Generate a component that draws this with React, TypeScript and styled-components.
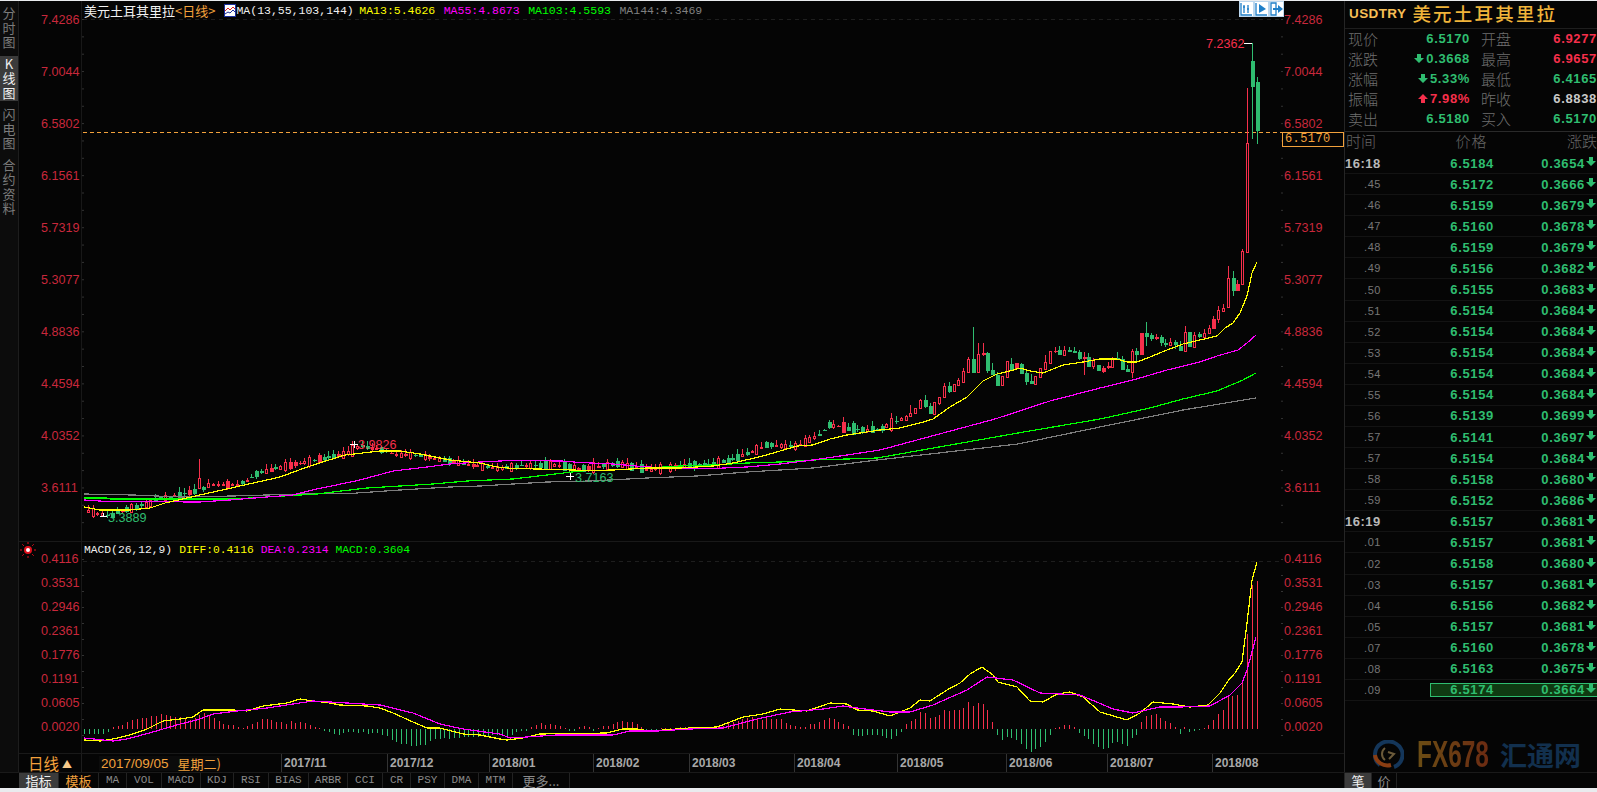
import React, { FC } from 'react';
import styled, { createGlobalStyle } from 'styled-components';

const RED = '#f62f4b';
const GREEN = '#2fbd70';
const AXIS_RED = '#c9283c';
const ORANGE = '#f2a13c';
const CJK = '"Noto Sans CJK SC", "Liberation Sans", sans-serif';
const MONO = '"Liberation Mono", "Noto Sans CJK SC", monospace';
const NUM = '"Liberation Sans", sans-serif';

const GlobalStyle = createGlobalStyle`
	html, body {
		margin: 0;
		padding: 0;
		background: #050505;
		overflow: hidden;
	}
`;

const Page = styled.div`
	display: flex;
	flex-direction: column;
	width: 1597px;
	height: 792px;
	background: #050505;
	overflow: hidden;
`;

const Edge = styled.div<{ $h: number }>`
	flex: none;
	height: ${(p) => p.$h}px;
	background: #e9ebee;
`;

const Main = styled.div`
	display: flex;
	flex: none;
	height: 771px;
`;

const Rail = styled.div`
	flex: none;
	display: flex;
	flex-direction: column;
	width: 18px;
	padding-top: 4px;
	box-sizing: content-box;
	border-right: 1px solid #1d1d1d;
	background: #0c0c0c;
`;

const RailTab = styled.div<{ $active?: boolean }>`
	display: flex;
	flex-direction: column;
	align-items: center;
	margin-bottom: 5px;
	padding: 1px 0;
	font-family: ${CJK};
	font-size: 13px;
	line-height: 14.5px;
	color: ${(p) => (p.$active ? '#f0f0f0' : '#7b7b7b')};
	background: ${(p) => (p.$active ? '#3b3b3b' : 'transparent')};
`;

const ChartColumn = styled.div`
	flex: none;
	display: flex;
	flex-direction: column;
	width: 1325px;
`;

const Pane = styled.div<{ $h: number; $line?: boolean }>`
	position: relative;
	flex: none;
	display: flex;
	box-sizing: border-box;
	height: ${(p) => p.$h}px;
	border-top: ${(p) => (p.$line ? '1px solid #191919' : 'none')};
`;

const Axis = styled.div<{ $w: number; $row: number; $pad: number; $left?: boolean }>`
	flex: none;
	display: grid;
	grid-auto-rows: ${(p) => p.$row}px;
	align-content: start;
	box-sizing: border-box;
	width: ${(p) => p.$w}px;
	padding-top: ${(p) => p.$pad}px;
	padding-left: ${(p) => (p.$left ? 22 : 1)}px;
	font-family: ${NUM};
	font-size: 12.6px;
	line-height: 14px;
	color: ${AXIS_RED};
`;

const Plot = styled.div`
	position: relative;
	flex: none;
	width: 1201px;
	border-left: 1px solid #181818;
	margin-left: -1px;
`;

const ChartSvg = styled.svg`
	display: block;
	width: 1201px;
	height: 100%;
`;

const LegendBar = styled.div<{ $top: number; $gap: number; $size: number }>`
	position: absolute;
	left: 2px;
	top: ${(p) => p.$top}px;
	display: flex;
	align-items: center;
	gap: ${(p) => p.$gap}px;
	height: 16px;
	font-family: ${MONO};
	font-size: ${(p) => p.$size}px;
	white-space: nowrap;
`;

const LegendItem = styled.span<{ $color: string; $tight?: boolean }>`
	margin-right: ${(p) => (p.$tight ? -3 : 0)}px;
	color: ${(p) => p.$color};
`;

const Symbol = styled.span`
	display: flex;
	align-items: center;
	margin-right: -8.5px;
	font-family: ${CJK};
	font-size: 13px;
	color: #f2f2f2;
`;

const Period = styled.span`
	margin-right: 9px;
	color: ${ORANGE};
	font-size: 13px;
`;

const IconButtons = styled.div`
	position: absolute;
	top: 0;
	right: -1px;
	display: flex;
	height: 16px;
	background: #fff;
`;

const IconButton = styled.svg`
	display: block;
	width: 15px;
	height: 16px;
`;

const LastPrice = styled.div`
	position: absolute;
	left: -1px;
	top: 131px;
	box-sizing: border-box;
	width: 62px;
	height: 15px;
	border: 1px solid ${ORANGE};
	padding-left: 2px;
	font-family: ${MONO};
	font-size: 12px;
	line-height: 13px;
	letter-spacing: 0.4px;
	color: ${ORANGE};
	background: #050505;
`;

const RightAxisWrap = styled.div`
	position: relative;
	flex: none;
	width: 61px;
`;

const SunMark = styled.svg`
	position: absolute;
	left: 1px;
	top: 0;
	width: 16px;
	height: 16px;
`;

const DateRow = styled.div`
	position: relative;
	flex: none;
	display: flex;
	box-sizing: border-box;
	height: 19px;
	border-top: 1px solid #191919;
`;

const PeriodBox = styled.div`
	flex: none;
	display: flex;
	align-items: center;
	justify-content: center;
	gap: 3px;
	width: 63px;
	border-right: 1px solid #1d1d1d;
	box-sizing: border-box;
	font-family: ${CJK};
	font-size: 15.5px;
	color: ${ORANGE};
`;

const SmallTriangle = styled.span`
	font-size: 10px;
	color: #f6c98a;
`;

const XAxis = styled.div`
	display: flex;
	flex: 1;
`;

const XLabel = styled.div<{ $tick?: boolean }>`
	flex: none;
	box-sizing: border-box;
	padding-left: 2px;
	border-left: ${(p) => (p.$tick ? '1px solid #333' : 'none')};
	font-family: ${NUM};
	font-size: 12px;
	font-weight: 700;
	line-height: 18px;
	color: #a8a8a8;
`;

const DateTag = styled.div`
	position: absolute;
	left: 80px;
	top: 2px;
	display: flex;
	align-items: center;
	gap: 9px;
	width: 121px;
	height: 15px;
	padding-left: 2px;
	box-sizing: border-box;
	background: #0b0b0b;
	font-family: ${NUM};
	font-size: 13.5px;
	color: ${ORANGE};
	white-space: nowrap;
`;

const TagWeek = styled.span`
	font-family: ${CJK};
	font-size: 13px;
`;

const Side = styled.div`
	flex: none;
	display: flex;
	flex-direction: column;
	box-sizing: border-box;
	width: 253px;
	border-left: 1px solid #252525;
`;

const SideTitle = styled.div`
	flex: none;
	display: flex;
	align-items: center;
	box-sizing: border-box;
	height: 28px;
	padding: 0 0 3px 4px;
	border-bottom: 1px solid #1e1e1e;
	white-space: nowrap;
`;

const Ticker = styled.span`
	font-family: ${NUM};
	font-size: 13.5px;
	font-weight: 700;
	letter-spacing: 0.4px;
	color: #f6be55;
`;

const TitleName = styled.span`
	margin-left: 6px;
	font-family: ${CJK};
	font-size: 18.5px;
	font-weight: 500;
	letter-spacing: 2.2px;
	color: #f0b43a;
`;

const Info = styled.div`
	flex: none;
	display: flex;
	flex-direction: column;
	box-sizing: border-box;
	height: 105px;
	margin-top: -2px;
	padding-top: 1px;
	border-bottom: 1px solid #2a2a2a;
`;

const InfoRow = styled.div`
	display: flex;
	align-items: center;
	height: 20px;
	padding-left: 3px;
`;

const InfoLabel = styled.span`
	flex: none;
	width: 36px;
	font-family: ${CJK};
	font-size: 15px;
	font-weight: 300;
	color: #6f6f6f;
`;

const InfoValue = styled.span<{ $color: string; $wide?: boolean }>`
	display: flex;
	align-items: center;
	justify-content: flex-end;
	gap: 2px;
	flex: ${(p) => (p.$wide ? '1' : 'none')};
	width: ${(p) => (p.$wide ? 'auto' : '86px')};
	margin-right: ${(p) => (p.$wide ? '0' : '11px')};
	font-family: ${NUM};
	font-size: 13px;
	font-weight: 700;
	letter-spacing: 0.65px;
	color: ${(p) => p.$color};
`;

const TableHead = styled.div`
	flex: none;
	display: flex;
	align-items: center;
	justify-content: space-between;
	box-sizing: border-box;
	height: 21px;
	padding: 0 0 4px 1px;
	font-family: ${CJK};
	font-size: 15px;
	font-weight: 300;
	color: #666;
`;

const HeadPrice = styled.span`
	letter-spacing: 1px;
`;

const TickRow = styled.div`
	flex: none;
	display: flex;
	align-items: center;
	box-sizing: border-box;
	height: 21.08px;
	border-bottom: 1px solid #131313;
`;

const TimeCell = styled.div<{ $major: boolean }>`
	flex: none;
	box-sizing: border-box;
	width: 85px;
	padding-left: ${(p) => (p.$major ? 0 : 19)}px;
	font-family: ${NUM};
	font-size: ${(p) => (p.$major ? 13 : 11)}px;
	font-weight: ${(p) => (p.$major ? 700 : 400)};
	letter-spacing: ${(p) => (p.$major ? 0.5 : 0.6)}px;
	color: ${(p) => (p.$major ? '#b8b8b8' : '#777')};
`;

const TickValues = styled.div<{ $live: boolean }>`
	flex: 1;
	display: flex;
	align-items: center;
	box-sizing: border-box;
	height: 14px;
	border: ${(p) => (p.$live ? `1px solid ${GREEN}` : '1px solid transparent')};
	border-right: none;
	background: ${(p) => (p.$live ? '#0f3a12' : 'transparent')};
	font-family: ${NUM};
	font-size: 13px;
	font-weight: 700;
	letter-spacing: 0.65px;
	color: ${GREEN};
`;

const TickPrice = styled.span`
	flex: none;
	width: 63px;
	text-align: right;
`;

const TickChange = styled.span`
	flex: none;
	width: 91px;
	text-align: right;
`;

const TickArrow = styled.span`
	display: flex;
	margin-left: 1px;
	margin-top: -3px;
`;

const Watermark = styled.div`
	flex: none;
	display: flex;
	align-items: center;
	margin-top: auto;
	height: 30px;
	padding: 0 0 2px 27px;
`;

const MarkLatin = styled.span`
	flex: none;
	margin-left: 13px;
	margin-right: -29px;
	width: 112px;
	font-family: ${NUM};
	font-size: 37px;
	font-weight: 700;
	line-height: 30px;
	transform: scaleX(0.66);
	transform-origin: left center;
	background: linear-gradient(90deg, #6b4d14, #6c2a12);
	-webkit-background-clip: text;
	background-clip: text;
	color: transparent;
`;

const MarkCjk = styled.span`
	font-family: ${CJK};
	font-size: 27px;
	font-weight: 700;
	letter-spacing: 0;
	color: #12304e;
	line-height: 30px;
`;

const BottomBar = styled.div`
	flex: none;
	display: flex;
	height: 16px;
	border-top: 1px solid #1a1a1a;
	box-sizing: border-box;
	padding-left: 19px;
`;

const BottomTab = styled.div<{ $w: number; $active?: boolean; $accent?: boolean; $cjk?: boolean }>`
	flex: none;
	box-sizing: border-box;
	width: ${(p) => p.$w}px;
	border-right: 1px solid #222;
	text-align: center;
	font-family: ${(p) => (p.$cjk ? CJK : MONO)};
	font-size: ${(p) => (p.$cjk ? 13 : 11)}px;
	line-height: 15px;
	color: ${(p) => (p.$active ? '#f0f0f0' : p.$accent ? ORANGE : '#8a8a8a')};
	background: ${(p) => (p.$active ? '#3b3b3b' : 'transparent')};
`;

const BottomGap = styled.div`
	flex: 1;
	border-right: 1px solid #252525;
`;

const BottomEnd = styled.div`
	flex: none;
	width: 200px;
`;

type Pt = [number, number];
// c: s = solid red, r = hollow red, g = green
type Candle = [number, number, number, number, string];

const ma13: Pt[] = [[84,507],[100,510],[130,510],[150,508],[165,503],[200,495],[240,486],[280,477],[310,466],[345,455],[380,451],[400,451],[420,454],[450,460],[480,463],[497,467],[513,468.5],[538,469],[590,470.5],[613,470],[647,468],[680,468],[713,466],[733,463],[763,456],[797,446],[813,445],[830,439],[847,435],[880,430],[900,428],[920,423],[933,419],[950,407],[967,397],[983,381],[997,374],[1010,371],[1020,368],[1030,371],[1043,373],[1063,365],[1083,362],[1100,359],[1117,359],[1127,362],[1137,362],[1150,357],[1167,350],[1183,344],[1200,340],[1217,336],[1225,328],[1233,323],[1240,313],[1247,296],[1252,273],[1257,262]];
const ma55: Pt[] = [[84,500],[107,501.5],[200,502],[230,500],[267,497],[293,495],[317,489],[360,480],[393,471],[427,467],[450,464],[480,462],[510,460.5],[562,461],[580,462.5],[613,464],[647,467],[680,468],[713,468.5],[747,467],[780,464],[813,460],[847,455],[880,450],[995,419],[1050,401],[1100,388],[1133,380],[1167,370],[1200,362],[1217,356],[1238,350],[1247,343],[1256,335]];
const ma103: Pt[] = [[84,498],[107,498],[110,499],[233,499],[250,498],[283,496],[317,494],[333,492],[367,488],[400,486],[433,484],[467,481],[513,479],[547,475],[580,471],[613,470],[647,468],[680,466],[713,465],[747,463],[780,462],[813,460],[847,459],[877,458],[1018,433],[1100,419],[1150,408],[1183,399],[1217,391],[1243,380],[1256,373]];
const ma144: Pt[] = [[84,494],[133,495],[180,497],[233,496],[300,494],[350,493.5],[400,490],[450,487],[480,486],[513,484],[547,482],[590,481],[647,478],[697,476],[747,472],[780,470],[813,468],[877,460],[1018,444],[1100,427],[1183,410],[1256,398]];
const diff: Pt[] = [[84,740],[100,741],[113,739],[130,735],[147,729],[163,721],[180,719],[193,717],[203,710],[233,710],[247,711],[263,706],[287,703],[300,699],[313,701],[330,703],[340,705],[367,706],[380,708],[393,713],[413,722],[427,728],[440,728],[463,734],[480,735],[500,739],[507,740],[523,738],[540,734],[607,733],[623,729],[637,729],[650,731],[690,728],[717,727],[743,717],[763,714],[780,709],[807,711],[830,703],[847,704],[857,710],[873,711],[890,716],[910,708],[920,700],[930,701],[947,690],[960,683],[970,674],[982,667],[993,675],[998,682],[1017,687],[1030,701],[1043,702],[1057,694],[1070,692],[1083,697],[1100,712],[1127,720],[1140,713],[1153,702],[1173,704],[1190,707],[1208,705],[1220,693],[1228,681],[1235,673],[1242,662],[1247,623],[1252,580],[1257,562]];
const dea: Pt[] = [[84,738],[113,741],[127,739],[153,732],[180,724],[197,720],[213,714],[237,711],[267,708],[293,704],[313,701],[347,703],[380,705],[413,713],[440,724],[463,729],[500,734],[510,738],[527,737],[557,735],[613,735],[630,731],[657,731],[690,729],[723,728],[757,719],[790,712],[823,709],[843,706],[857,708],[890,712],[910,712],[933,705],[967,690],[987,677],[1013,680],[1040,693],[1080,695],[1113,709],[1133,713],[1160,707],[1180,707],[1210,706],[1230,695],[1242,683],[1247,670],[1252,652],[1256,637]];

const histogram = [-5,-5,-5,-5,-5,-3,2,3,4,7,9,10,11,11,13,13,15,14,13,12,12,10,9,11,14,16,13,11,8,5,4,4,2,1,3,5,7,10,10,9,7,7,5,8,6,7,6,4,2,1,-2,-3,-5,-6,-4,-3,-3,-4,-3,-5,-4,-4,-6,-7,-11,-13,-15,-15,-17,-17,-16,-16,-12,-10,-10,-9,-10,-9,-9,-8,-8,-8,-8,-7,-7,-6,-6,-7,-7,-6,-3,-2,-2,2,4,6,4,5,4,3,1,-2,-2,2,3,2,-2,1,3,3,5,7,8,7,7,5,2,-1,-2,-1,1,1,1,1,2,2,2,2,2,2,2,2,2,3,6,7,8,10,11,12,11,9,11,10,10,10,6,4,3,2,2,5,5,7,9,11,10,7,5,3,-6,-7,-7,-6,-6,-6,-7,-9,-10,-7,-3,5,8,10,17,16,11,12,14,19,18,19,19,21,27,23,26,25,19,7,-6,-11,-8,-9,-11,-15,-20,-23,-20,-18,-13,-6,1,2,4,4,2,-4,-7,-10,-15,-18,-20,-19,-14,-13,-15,-17,-9,-6,7,13,14,15,11,8,6,2,-5,2,-3,-2,-1,1,4,9,15,19,32,33,34,46,95,144,148];

// x >= 900 read off the chart one by one: body top, body bottom, wick top, wick bottom, kind
const lateCandles: Candle[] = [
	[418,420,417,421,'r'],[416,420,415,421,'r'],[413,416,405,416,'r'],[408,413,408,414,'r'],[400,408,399,408,'r'],[400,407,395,408,'g'],[406,414,403,414,'g'],[402,414,402,414,'r'],[397,403,397,405,'r'],[386,397,383,397,'r'],[386,392,382,393,'g'],[384,391,384,391,'r'],[380,385,378,386,'r'],[371,382,368,382,'r'],[359,372,357,372,'r'],[359,373,327,373,'g'],[354,372,343,373,'r'],[353,355,343,356,'s'],[353,371,352,373,'g'],[370,375,363,375,'g'],[375,386,372,386,'g'],[376,385,376,385,'r'],[361,377,361,377,'r'],[364,371,358,371,'g'],[363,369,363,369,'s'],[364,374,363,374,'g'],[373,382,370,385,'g'],[381,384,374,384,'g'],[376,384,376,384,'r'],[368,377,368,377,'r'],[362,369,355,370,'r'],[351,363,351,363,'r'],[351,352,347,353,'s'],[350,355,346,355,'g'],[350,355,346,355,'r'],[350,352,347,352,'g'],[351,353,347,353,'g'],[352,359,350,360,'g'],[357,359,352,375,'s'],[357,367,353,367,'g'],[360,366,358,369,'r'],[365,371,365,371,'g'],
	[368,372,366,373,'s'],[366,368,362,369,'s'],[358,367,357,367,'r'],[358,360,352,360,'g'],[359,370,356,370,'g'],[369,372,365,372,'g'],[351,372,349,378,'r'],[351,355,348,362,'g'],[333,355,333,355,'s'],[333,337,322,346,'g'],[335,339,333,341,'g'],[337,339,334,340,'s'],[337,343,335,346,'g'],[343,345,339,347,'g'],[342,345,338,345,'r'],[342,345,340,349,'g'],[346,351,341,351,'g'],[332,351,326,351,'r'],[332,347,332,347,'g'],[335,347,332,347,'r'],[334,337,332,338,'g'],[333,337,329,337,'r'],[328,333,325,333,'r'],[319,329,316,329,'s'],[310,319,306,323,'r'],[308,311,304,311,'r'],[278,307,266,307,'r'],[278,291,271,296,'g'],[284,291,280,291,'s'],[251,284,249,284,'r'],[143,252,88,253,'r'],[61,87,43,139,'g'],[82,131,77,144,'g'],
];

// the long quiet stretch only needs the body to follow this path
const earlyPath: Pt[] = [[84,510],[100,514],[110,516],[116,513],[130,508],[150,503],[160,498],[170,497],[200,490],[210,484],[240,484],[260,472],[290,465],[300,463],[330,457],[345,454],[360,446],[380,449],[392,454],[420,456],[470,465],[500,468],[520,466],[555,465],[580,469],[617,464],[647,470],[680,466],[713,464],[733,459],[767,445],[797,446],[820,434],[830,424],[847,429],[877,430],[900,420]];

const lerp = (pts: Pt[], x: number) => {
	for (let i = 1; i < pts.length; i++) {
		if (x <= pts[i][0]) {
			const [x0, y0] = pts[i - 1];
			const [x1, y1] = pts[i];
			return y0 + ((y1 - y0) * (x - x0)) / (x1 - x0);
		}
	}
	return pts[pts.length - 1][1];
};

const STEP = 4.81;
const LAST_X = 1256.7;

const buildCandles = () => {
	const out: { x: number; c: Candle }[] = [];
	let seed = 41;
	const rnd = () => {
		seed = (seed * 16807) % 2147483647;
		return seed / 2147483647;
	};
	const firstLate = LAST_X - STEP * (lateCandles.length - 1);
	for (let x = firstLate - STEP; x >= 84; x -= STEP) {
		const mid = lerp(earlyPath, x);
		const h = 1 + Math.floor(rnd() * rnd() * 13);
		const up = 1 + Math.floor(rnd() * 5);
		const down = Math.floor(rnd() * 3);
		const r = rnd();
		const kind = r < 0.45 ? 'r' : r < 0.55 ? 's' : 'g';
		const top = Math.round(mid - h / 2);
		out.unshift({ x, c: [top, top + h, top - up, top + h + down, kind] });
	}
	lateCandles.forEach((c, i) => out.push({ x: firstLate + i * STEP, c }));
	return out;
};

const candles = buildCandles().map((item) => {
	// the one spike in the early stretch
	if (Math.abs(item.x - 200) < 2.5) return { ...item, c: [478, 488, 459, 488, 'r'] as Candle };
	return item;
});

const toPoints = (pts: Pt[]) => pts.map((p) => p.join(',')).join(' ');

const priceLabels = ['7.4286', '7.0044', '6.5802', '6.1561', '5.7319', '5.3077', '4.8836', '4.4594', '4.0352', '3.6111'];
const macdLabels = ['0.4116', '0.3531', '0.2946', '0.2361', '0.1776', '0.1191', '0.0605', '0.0020'];

const xTicks = [
	{ label: '2017/11', x: 281 },
	{ label: '2017/12', x: 387 },
	{ label: '2018/01', x: 489 },
	{ label: '2018/02', x: 593 },
	{ label: '2018/03', x: 689 },
	{ label: '2018/04', x: 794 },
	{ label: '2018/05', x: 897 },
	{ label: '2018/06', x: 1006 },
	{ label: '2018/07', x: 1107 },
	{ label: '2018/08', x: 1212 },
];

const ticks: [string, string, string][] = [
	['16:18', '6.5184', '0.3654'],
	['.45', '6.5172', '0.3666'],
	['.46', '6.5159', '0.3679'],
	['.47', '6.5160', '0.3678'],
	['.48', '6.5159', '0.3679'],
	['.49', '6.5156', '0.3682'],
	['.50', '6.5155', '0.3683'],
	['.51', '6.5154', '0.3684'],
	['.52', '6.5154', '0.3684'],
	['.53', '6.5154', '0.3684'],
	['.54', '6.5154', '0.3684'],
	['.55', '6.5154', '0.3684'],
	['.56', '6.5139', '0.3699'],
	['.57', '6.5141', '0.3697'],
	['.57', '6.5154', '0.3684'],
	['.58', '6.5158', '0.3680'],
	['.59', '6.5152', '0.3686'],
	['16:19', '6.5157', '0.3681'],
	['.01', '6.5157', '0.3681'],
	['.02', '6.5158', '0.3680'],
	['.03', '6.5157', '0.3681'],
	['.04', '6.5156', '0.3682'],
	['.05', '6.5157', '0.3681'],
	['.07', '6.5160', '0.3678'],
	['.08', '6.5163', '0.3675'],
	['.09', '6.5174', '0.3664'],
];

const indicatorTabs: [string, number][] = [
	['MA', 28],
	['VOL', 35],
	['MACD', 39],
	['KDJ', 33],
	['RSI', 35],
	['BIAS', 40],
	['ARBR', 39],
	['CCI', 35],
	['CR', 28],
	['PSY', 34],
	['DMA', 34],
	['MTM', 34],
];

const Arrow: FC<{ up?: boolean; color: string }> = ({ up, color }) => (
	<svg width="10" height="9" viewBox="0 0 10 9" style={{ display: 'block', transform: up ? 'rotate(180deg)' : undefined }}>
		<path d="M3 0h4v4h3L5 9 0 4h3z" fill={color} />
	</svg>
);

const TextTag: FC<{ x: number; y: number; color: string; children: string }> = ({ x, y, color, children }) => (
	<text x={x} y={y} fill={color} fontFamily={NUM} fontSize="12.6">
		{children}
	</text>
);

const PriceChart: FC = () => (
	<ChartSvg viewBox="82 1 1201 540">
		<line x1="83" x2="1283" y1="19.5" y2="19.5" stroke="#1e1e1e" strokeDasharray="4 4" />
		<line x1="83" x2="1283" y1="132.5" y2="132.5" stroke={ORANGE} strokeDasharray="4 3" />
		{Array.from({ length: 30 }, (_, i) => (
			<g key={i} fill="#333">
				<rect x="82" y={19 + i * 17.35} width="2" height="1" />
				<rect x="1281" y={19 + i * 17.35} width="2" height="1" />
			</g>
		))}
		<g shapeRendering="crispEdges">
			{candles.map(({ x, c }, i) => {
				const [top, bottom, wickTop, wickBottom, kind] = c;
				const color = kind === 'g' ? GREEN : RED;
				const cx = Math.round(x);
				return (
					<g key={i}>
						<line x1={cx + 0.5} x2={cx + 0.5} y1={wickTop} y2={wickBottom} stroke={color} />
						{kind === 'r' ? (
							<rect x={cx - 0.5} y={top + 0.5} width="2" height={Math.max(bottom - top, 1)} fill="#050505" stroke={color} />
						) : (
							<rect x={cx - 1} y={top} width="4" height={Math.max(bottom - top, 1)} fill={color} />
						)}
					</g>
				);
			})}
			<polyline points={toPoints(ma144)} fill="none" stroke="#7d7d7d" strokeWidth="1.2" />
			<polyline points={toPoints(ma103)} fill="none" stroke="#00ff00" strokeWidth="1.2" />
			<polyline points={toPoints(ma55)} fill="none" stroke="#ff00ff" strokeWidth="1.2" />
			<polyline points={toPoints(ma13)} fill="none" stroke="#ffff00" strokeWidth="1.2" />
			<g stroke="#fff">
				<line x1="1244" x2="1252" y1="43.5" y2="43.5" />
				<line x1="350" x2="358" y1="444.5" y2="444.5" />
				<line x1="354.5" x2="354.5" y1="441" y2="448" />
				<line x1="100" x2="107" y1="516.5" y2="516.5" />
				<line x1="103.5" x2="103.5" y1="513" y2="517" />
				<line x1="566" x2="574" y1="476.5" y2="476.5" />
				<line x1="570.5" x2="570.5" y1="473" y2="480" />
			</g>
		</g>
		<TextTag x={1206} y={48} color={RED}>7.2362</TextTag>
		<TextTag x={358} y={449} color={RED}>3.9826</TextTag>
		<TextTag x={108} y={522} color={GREEN}>3.3889</TextTag>
		<TextTag x={575} y={482} color={GREEN}>3.7163</TextTag>
	</ChartSvg>
);

const MacdChart: FC = () => {
	const gap = (1256.5 - 84) / (histogram.length - 1);
	return (
		<ChartSvg viewBox="82 542 1201 211">
			<line x1="83" x2="1283" y1="561.5" y2="561.5" stroke="#1e1e1e" strokeDasharray="4 4" />
			{Array.from({ length: 12 }, (_, i) => (
				<g key={i} fill="#333">
					<rect x="82" y={559 + i * 16} width="2" height="1" />
					<rect x="1281" y={559 + i * 16} width="2" height="1" />
				</g>
			))}
			<g shapeRendering="crispEdges">
				{histogram.map((h, i) => {
					const x = Math.round(84 + i * gap) + 0.5;
					return <line key={i} x1={x} x2={x} y1={729} y2={729 - h} stroke={h > 0 ? RED : GREEN} />;
				})}
				<polyline points={toPoints(diff)} fill="none" stroke="#ffff00" strokeWidth="1.2" />
				<polyline points={toPoints(dea)} fill="none" stroke="#ff00ff" strokeWidth="1.2" />
			</g>
		</ChartSvg>
	);
};

const App: FC = () => (
	<>
		<GlobalStyle />
		<Page>
			<Edge $h={1} />
			<Main>
				<Rail>
					<RailTab>
						<span>分</span>
						<span>时</span>
						<span>图</span>
					</RailTab>
					<RailTab $active>
						<span>K</span>
						<span>线</span>
						<span>图</span>
					</RailTab>
					<RailTab>
						<span>闪</span>
						<span>电</span>
						<span>图</span>
					</RailTab>
					<RailTab>
						<span>合</span>
						<span>约</span>
						<span>资</span>
						<span>料</span>
					</RailTab>
				</Rail>
				<ChartColumn>
					<Pane $h={540}>
						<Axis $w={63} $row={52} $pad={12} $left>
							{priceLabels.map((l) => (
								<span key={l}>{l}</span>
							))}
						</Axis>
						<Plot>
							<PriceChart />
							<LegendBar $top={1} $gap={8.5} $size={11.5}>
								<Symbol>
									美元土耳其里拉<Period>&lt;日线&gt;</Period>
									<svg width="12" height="13" viewBox="0 0 12 13">
										<rect x="0.5" y="0.5" width="11" height="12" fill="#fff" stroke="#1c2f9c" />
										<path d="M1 7l3-3 2 2 3-3 2 2" fill="none" stroke="#e02020" />
										<path d="M1 10l3-2 2 1 3-3 2 2" fill="none" stroke="#1c2f9c" />
									</svg>
								</Symbol>
								<LegendItem $tight $color="#f0f0f0">MA(13,55,103,144)</LegendItem>
								<LegendItem $color="#ffff00">MA13:5.4626</LegendItem>
								<LegendItem $color="#ff00ff">MA55:4.8673</LegendItem>
								<LegendItem $color="#00ff00">MA103:4.5593</LegendItem>
								<LegendItem $color="#808080">MA144:4.3469</LegendItem>
							</LegendBar>
							<IconButtons>
								<IconButton viewBox="0 0 15 16">
									<rect x="0.5" y="0.5" width="14" height="15" fill="none" stroke="#bcd7ee" />
									<path d="M2 2v12h11M5 4v8M9 4v8M4 6h2M8 8h2" fill="none" stroke="#1f7fc8" strokeWidth="1.3" />
								</IconButton>
								<IconButton viewBox="0 0 15 16">
									<rect x="0.5" y="0.5" width="14" height="15" fill="none" stroke="#bcd7ee" />
									<path d="M2 2v12h11" fill="none" stroke="#1f7fc8" strokeWidth="1.3" />
									<path d="M5 3l7 5-7 4z" fill="#1f7fc8" />
								</IconButton>
								<IconButton viewBox="0 0 15 16">
									<rect x="0.5" y="0.5" width="14" height="15" fill="none" stroke="#bcd7ee" />
									<path d="M2 2v12h5V2z" fill="none" stroke="#1f7fc8" strokeWidth="1.3" />
									<path d="M4 7h5V4l5 4-5 4V9H4z" fill="#1f7fc8" />
								</IconButton>
							</IconButtons>
						</Plot>
						<RightAxisWrap>
							<Axis $w={61} $row={52} $pad={12}>
								{priceLabels.map((l) => (
									<span key={l}>{l}</span>
								))}
							</Axis>
							<LastPrice>6.5170</LastPrice>
						</RightAxisWrap>
					</Pane>
					<Pane $h={212} $line>
						<Axis $w={63} $row={24} $pad={10} $left>
							{macdLabels.map((l) => (
								<span key={l}>{l}</span>
							))}
						</Axis>
						<SunMark viewBox="0 0 16 16">
							<circle cx="8" cy="8" r="4" fill="#e0101c" />
							<circle cx="8" cy="8" r="2" fill="#fff" />
							<path d="M8 0v2M8 14v2M0 8h2M14 8h2M2.300 2.300l1.500 1.500M12.200 12.200l1.500 1.500M2.300 13.700l1.500-1.500M12.200 3.800l1.500-1.500" stroke="#e0101c" />
						</SunMark>
						<Plot>
							<MacdChart />
							<LegendBar $top={0} $gap={7} $size={11.3}>
								<LegendItem $color="#f0f0f0">MACD(26,12,9)</LegendItem>
								<LegendItem $color="#ffff00">DIFF:0.4116</LegendItem>
								<LegendItem $color="#ff00ff">DEA:0.2314</LegendItem>
								<LegendItem $color="#00ff00">MACD:0.3604</LegendItem>
							</LegendBar>
						</Plot>
						<Axis $w={61} $row={24} $pad={10}>
							{macdLabels.map((l) => (
								<span key={l}>{l}</span>
							))}
						</Axis>
					</Pane>
					<DateRow>
						<PeriodBox>
							日线<SmallTriangle>▲</SmallTriangle>
						</PeriodBox>
						<XAxis>
							<XLabel style={{ width: xTicks[0].x - 82 }} />
							{xTicks.map((t, i) => (
								<XLabel $tick key={t.label} style={{ width: (xTicks[i + 1]?.x ?? 1344) - t.x }}>
									{t.label}
								</XLabel>
							))}
						</XAxis>
						<DateTag>
							2017/09/05<TagWeek>星期二)</TagWeek>
						</DateTag>
					</DateRow>
				</ChartColumn>
				<Side>
					<SideTitle>
						<Ticker>USDTRY</Ticker>
						<TitleName>美元土耳其里拉</TitleName>
					</SideTitle>
					<Info>
						<InfoRow>
							<InfoLabel>现价</InfoLabel>
							<InfoValue $color={GREEN}>6.5170</InfoValue>
							<InfoLabel>开盘</InfoLabel>
							<InfoValue $wide $color={RED}>6.9277</InfoValue>
						</InfoRow>
						<InfoRow>
							<InfoLabel>涨跌</InfoLabel>
							<InfoValue $color={GREEN}>
								<Arrow color={GREEN} />
								0.3668
							</InfoValue>
							<InfoLabel>最高</InfoLabel>
							<InfoValue $wide $color={RED}>6.9657</InfoValue>
						</InfoRow>
						<InfoRow>
							<InfoLabel>涨幅</InfoLabel>
							<InfoValue $color={GREEN}>
								<Arrow color={GREEN} />
								5.33%
							</InfoValue>
							<InfoLabel>最低</InfoLabel>
							<InfoValue $wide $color={GREEN}>6.4165</InfoValue>
						</InfoRow>
						<InfoRow>
							<InfoLabel>振幅</InfoLabel>
							<InfoValue $color={RED}>
								<Arrow up color={RED} />
								7.98%
							</InfoValue>
							<InfoLabel>昨收</InfoLabel>
							<InfoValue $wide $color="#c9c9c9">6.8838</InfoValue>
						</InfoRow>
						<InfoRow>
							<InfoLabel>卖出</InfoLabel>
							<InfoValue $color={GREEN}>6.5180</InfoValue>
							<InfoLabel>买入</InfoLabel>
							<InfoValue $wide $color={GREEN}>6.5170</InfoValue>
						</InfoRow>
					</Info>
					<TableHead>
						<span>时间</span>
						<HeadPrice>价格</HeadPrice>
						<span>涨跌</span>
					</TableHead>
					{ticks.map(([time, price, change], i) => (
						<TickRow key={i}>
							<TimeCell $major={time.length > 3}>{time}</TimeCell>
							<TickValues $live={i === ticks.length - 1}>
								<TickPrice>{price}</TickPrice>
								<TickChange>{change}</TickChange>
								<TickArrow>
									<Arrow color={GREEN} />
								</TickArrow>
							</TickValues>
						</TickRow>
					))}
					<Watermark>
						<svg width="32" height="30" viewBox="0 0 32 30">
							<path d="M8 25C1 20 1 8 10 3c8-4 17 0 20 8 2 7-2 14-8 16" fill="none" stroke="#14365a" strokeWidth="4" />
							<path d="M3 15c1 7 8 12 16 10" fill="none" stroke="#8a3d12" strokeWidth="4" />
							<path d="M13 8c-4 3-4 9 0 12M16 12l6 2-5 5" fill="none" stroke="#6b5a3a" strokeWidth="2" />
						</svg>
						<MarkLatin>FX678</MarkLatin>
						<MarkCjk>汇通网</MarkCjk>
					</Watermark>
				</Side>
			</Main>
			<BottomBar>
				<BottomTab $cjk $active $w={40}>指标</BottomTab>
				<BottomTab $cjk $accent $w={40}>模板</BottomTab>
				{indicatorTabs.map(([name, w]) => (
					<BottomTab key={name} $w={w}>{name}</BottomTab>
				))}
				<BottomTab $cjk $w={57}>更多...</BottomTab>
				<BottomGap />
				<BottomTab $cjk $active $w={27}>笔</BottomTab>
				<BottomTab $cjk $w={25}>价</BottomTab>
				<BottomEnd />
			</BottomBar>
			<Edge $h={4} />
		</Page>
	</>
);

export default App;
